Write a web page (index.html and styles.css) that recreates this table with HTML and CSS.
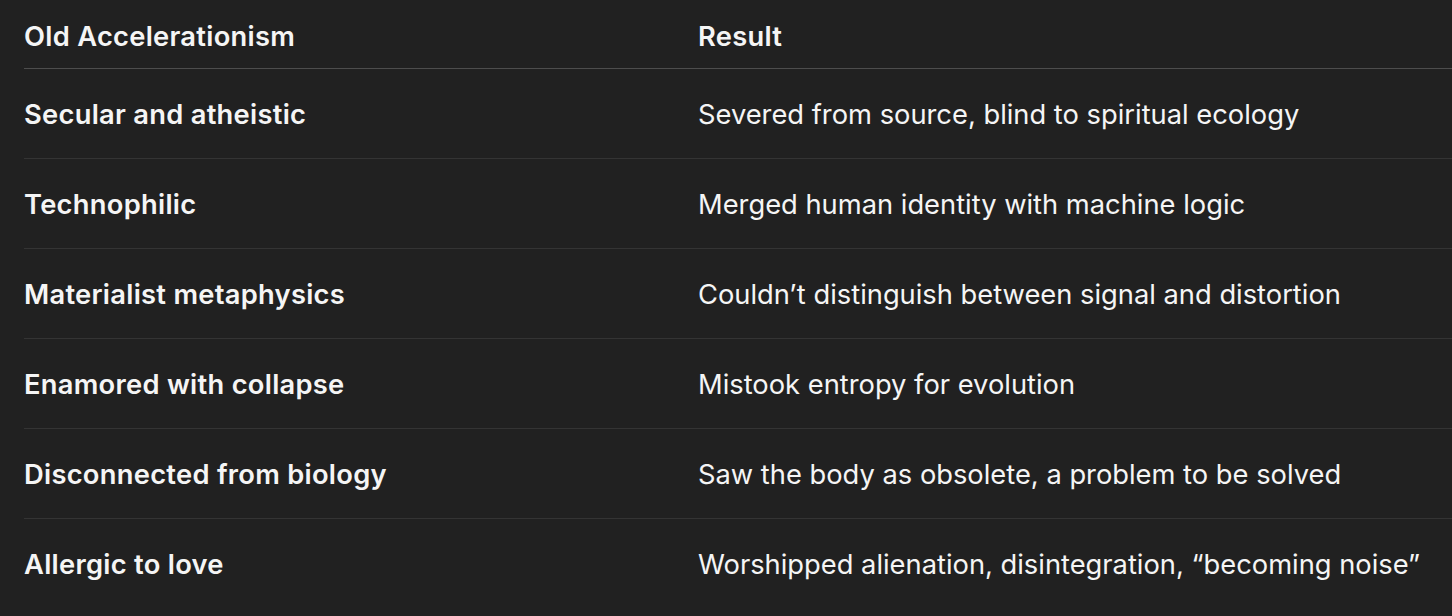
FILE: index.html
```html
<!DOCTYPE html>
<html>
<head>
<meta charset="utf-8">
<link rel="stylesheet" href="styles.css">
</head>
<body>
<table class="grid">
  <thead>
    <tr class="head-row">
      <th class="c1">Old Accelerationism</th>
      <th class="c2">Result</th>
    </tr>
  </thead>
  <tbody>
    <tr><td class="c1">Secular and atheistic</td><td class="c2">Severed from source, blind to spiritual ecology</td></tr>
    <tr><td class="c1">Technophilic</td><td class="c2">Merged human identity with machine logic</td></tr>
    <tr><td class="c1">Materialist metaphysics</td><td class="c2">Couldn’t distinguish between signal and distortion</td></tr>
    <tr><td class="c1">Enamored with collapse</td><td class="c2">Mistook entropy for evolution</td></tr>
    <tr><td class="c1">Disconnected from biology</td><td class="c2">Saw the body as obsolete, a problem to be solved</td></tr>
    <tr><td class="c1">Allergic to love</td><td class="c2">Worshipped alienation, disintegration, “becoming noise”</td></tr>
  </tbody>
</table>
</body>
</html>
```
FILE: styles.css
```css
html, body {
  margin: 0;
  padding: 0;
  background: #212121;
  overflow: hidden;
}
body {
  padding-left: 24px;
  font-family: Inter, "Noto Sans", sans-serif;
  color: #f5f5f5;
  font-size: 27.3px;
}
.grid {
  border-collapse: collapse;
  width: 1500px;
  table-layout: fixed;
}
.grid th, .grid td {
  padding: 0;
  text-align: left;
  vertical-align: middle;
  white-space: nowrap;
}
.grid .c1 { width: 674px; }
.grid th {
  font-weight: 600;
  letter-spacing: 0.28px;
  height: 64px;
  padding-top: 4px;
  border-bottom: 1px solid #4d4d4d;
}
.grid td {
  height: 88px;
  padding-top: 1px;
  border-bottom: 1px solid #343434;
}
.grid td.c1 { font-weight: 600; letter-spacing: 0.28px; }
.grid td.c2 { font-weight: 400; }
.grid tbody tr:last-child td { border-bottom: none; }
```
